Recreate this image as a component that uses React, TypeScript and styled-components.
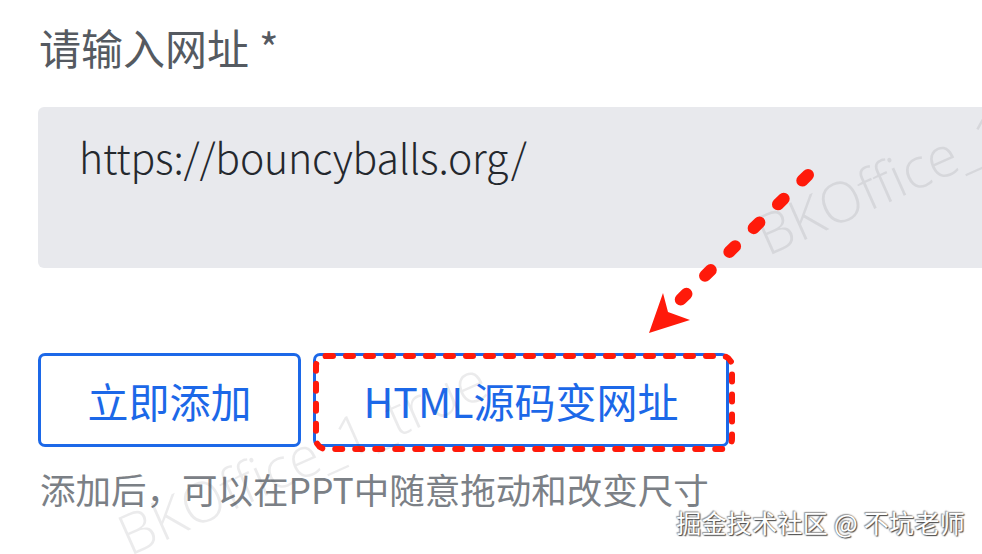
import React from 'react';
import styled, { createGlobalStyle } from 'styled-components';

const GlobalStyle = createGlobalStyle`
  html, body {
    margin: 0;
    padding: 0;
    background: #ffffff;
  }
  body {
    font-family: "Noto Sans CJK SC", "Noto Sans", sans-serif;
  }
`;

const Page = styled.div`
  position: relative;
  width: 982px;
  height: 554px;
  overflow: hidden;
  box-sizing: border-box;
  padding: 23px 0 0 38px;
  display: flex;
  flex-direction: column;
  align-items: flex-start;
`;

const FieldLabel = styled.label`
  color: #555a61;
  font-size: 42px;
  line-height: 48px;
  font-weight: 400;
  padding-left: 1px;
  margin-bottom: 36px;

  span {
    margin-left: 10px;
  }
`;

const UrlBox = styled.div`
  width: 1000px;
  height: 161px;
  box-sizing: border-box;
  background: #e8e9ed;
  border-radius: 6px;
  padding: 23px 0 0 41px;
  color: #24282d;
  font-size: 41px;
  font-weight: 300;
  line-height: 52px;
  letter-spacing: -0.2px;
`;

const ButtonRow = styled.div`
  display: flex;
  gap: 12px;
  margin-top: 85px;
`;

const Button = styled.button<{ width: number }>`
  position: relative;
  width: ${({ width }) => width}px;
  height: 94px;
  box-sizing: border-box;
  border: 3px solid #1c68e8;
  border-radius: 7px;
  background: #ffffff;
  color: #1c68e8;
  font-family: "Noto Sans CJK SC", "Noto Sans", sans-serif;
  font-size: 41px;
  line-height: 1;
  padding: 0;
  display: flex;
  align-items: center;
  justify-content: center;
`;

const HighlightFrame = styled.svg`
  position: absolute;
  left: -3px;
  top: -3px;
  width: calc(100% + 6px);
  height: calc(100% + 6px);
  overflow: visible;
  pointer-events: none;
`;

const HelpText = styled.p`
  margin: 20px 0 0 2px;
  color: #7b8086;
  font-size: 35.5px;
  line-height: 43px;
`;

const Watermark = styled.div<{ left: number; top: number }>`
  position: absolute;
  left: ${({ left }) => left}px;
  top: ${({ top }) => top}px;
  transform: rotate(-24deg);
  transform-origin: left bottom;
  color: rgba(60, 60, 70, 0.1);
  font-family: "Open Sans", sans-serif;
  font-weight: 300;
  font-size: 56px;
  line-height: 1;
  white-space: nowrap;
  pointer-events: none;
`;

const ArrowLayer = styled.svg`
  position: absolute;
  left: 0;
  top: 0;
  width: 982px;
  height: 554px;
  pointer-events: none;
`;

const Credit = styled.div`
  position: absolute;
  right: 17px;
  bottom: 17px;
  color: #ffffff;
  font-size: 25px;
  line-height: 30px;
  letter-spacing: 0.3px;
  text-shadow: 1px 1px 1px #4a4a4a, -1px -1px 1px #9a9a9a, 0 0 2px #6a6a6a;
  white-space: nowrap;
`;

function HighlightRect() {
  return (
    <HighlightFrame>
      <rect
        x="3"
        y="3"
        width="416"
        height="93"
        rx="10"
        fill="none"
        stroke="#ff1a0a"
        strokeWidth="6"
        strokeLinecap="round"
        strokeDasharray="7 13"
      />
    </HighlightFrame>
  );
}

export default function App() {
  return (
    <>
      <GlobalStyle />
      <Page>
        <FieldLabel>
          请输入网址<span>*</span>
        </FieldLabel>
        <UrlBox>https://bouncyballs.org/</UrlBox>
        <ButtonRow>
          <Button width={263}>立即添加</Button>
          <Button width={416}>
            HTML源码变网址
            <HighlightRect />
          </Button>
        </ButtonRow>
        <HelpText>添加后，可以在PPT中随意拖动和改变尺寸</HelpText>

        <Watermark left={770} top={206}>BKOffice_1</Watermark>
        <Watermark left={132} top={506}>BKOffice_1_true</Watermark>

        <ArrowLayer viewBox="0 0 982 554">
          <line
            x1="808"
            y1="175"
            x2="672"
            y2="308"
            stroke="#ff1a0a"
            strokeWidth="12"
            strokeLinecap="round"
            strokeDasharray="8 26"
          />
          <path d="M663 293 L649 333 L690 320 L668 312 Z" fill="#ff1a0a" />
        </ArrowLayer>

        <Credit>掘金技术社区 @ 不坑老师</Credit>
      </Page>
    </>
  );
}
